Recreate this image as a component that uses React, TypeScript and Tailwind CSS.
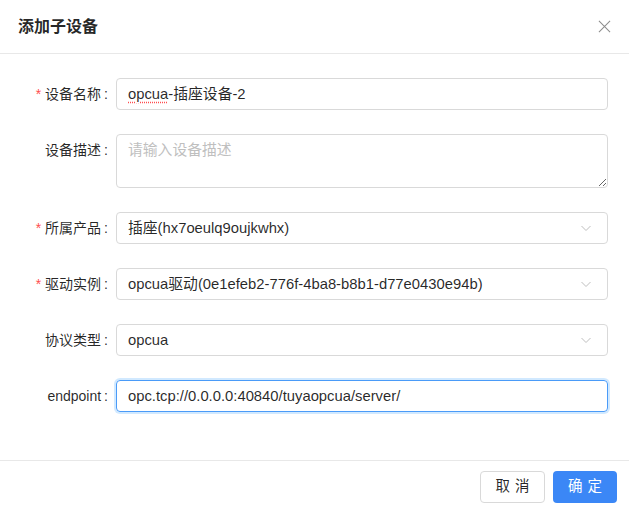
import React from 'react';

const font = 'font-["Liberation_Sans","Noto_Sans_CJK_SC",sans-serif]';

function Chevron() {
  return (
    <svg className="w-3 h-3 text-[#bfbfbf]" viewBox="0 0 12 12" fill="none" stroke="currentColor" strokeWidth={1}>
      <path d="M1.5 4l4.5 4.5L10.5 4" />
    </svg>
  );
}

function Label({ text, required }: { text: string; required?: boolean }) {
  return (
    <div className="w-[116px] shrink-0 pr-2 h-8 flex items-center justify-end text-[14px] text-[rgba(0,0,0,0.85)]">
      {required && <span className="text-[#ff4d4f] mr-1 text-[14px]">*</span>}
      <span>{text}</span>
      <span className="ml-[3px]">:</span>
    </div>
  );
}

function SelectBox({ value }: { value: string }) {
  return (
    <div className="flex-1 h-8 border border-[#d9d9d9] rounded-[4px] flex items-center justify-between pl-[11px] pr-[15px] text-[14.8px] text-[rgba(0,0,0,0.85)]">
      <span>{value}</span>
      <Chevron />
    </div>
  );
}

export default function App() {
  return (
    <div className={`w-[629px] h-[509px] bg-white flex flex-col ${font}`}>
      <div className="h-[54px] shrink-0 border-b border-[#e8e8e8] flex items-center justify-between pl-[18px] pr-[18px]">
        <span className="text-[16px] font-bold text-[rgba(0,0,0,0.85)]">添加子设备</span>
        <svg className="w-[13px] h-[13px] text-[#8c8c8c]" viewBox="0 0 14 14" fill="none" stroke="currentColor" strokeWidth={1.1}>
          <path d="M1 1l12 12M13 1L1 13" />
        </svg>
      </div>

      <div className="flex-1 pt-6 pr-[21px] flex flex-col gap-6">
        <div className="flex">
          <Label text="设备名称" required />
          <div className="flex-1 h-8 border border-[#d9d9d9] rounded-[4px] flex items-center px-[11px] text-[14.8px] text-[rgba(0,0,0,0.85)]">
            <span className="underline decoration-dotted decoration-[#ff4d4f] underline-offset-[3px]">opcua</span>
            <span>-插座设备-2</span>
          </div>
        </div>

        <div className="flex">
          <Label text="设备描述" />
          <textarea
            className="flex-1 h-[54px] border border-[#d9d9d9] rounded-[4px] px-[11px] py-[4px] text-[14.8px] leading-[22px] placeholder:text-[#bfbfbf] outline-none resize-y"
            placeholder="请输入设备描述"
          />
        </div>

        <div className="flex">
          <Label text="所属产品" required />
          <SelectBox value="插座(hx7oeulq9oujkwhx)" />
        </div>

        <div className="flex">
          <Label text="驱动实例" required />
          <SelectBox value="opcua驱动(0e1efeb2-776f-4ba8-b8b1-d77e0430e94b)" />
        </div>

        <div className="flex">
          <Label text="协议类型" />
          <SelectBox value="opcua" />
        </div>

        <div className="flex">
          <Label text="endpoint" />
          <div className="flex-1 h-8 border border-[#4a9bf8] rounded-[4px] shadow-[0_0_0_2px_rgba(24,144,255,0.2)] flex items-center px-[11px] text-[14.8px] text-[rgba(0,0,0,0.85)]">
            opc.tcp://0.0.0.0:40840/tuyaopcua/server/
          </div>
        </div>
      </div>

      <div className="h-[49px] shrink-0 border-t border-[#e8e8e8] flex items-start justify-end gap-2 pt-[10px] pr-[12px]">
        <button className="w-[65px] h-8 border border-[#d9d9d9] rounded-[4px] bg-white text-[14.5px] tracking-[5px] pl-[5px] text-[rgba(0,0,0,0.85)]">
          取消
        </button>
        <button className="w-16 h-8 rounded-[4px] bg-[#3b87f6] text-white text-[14.5px] tracking-[5px] pl-[5px]">
          确定
        </button>
      </div>
    </div>
  );
}
